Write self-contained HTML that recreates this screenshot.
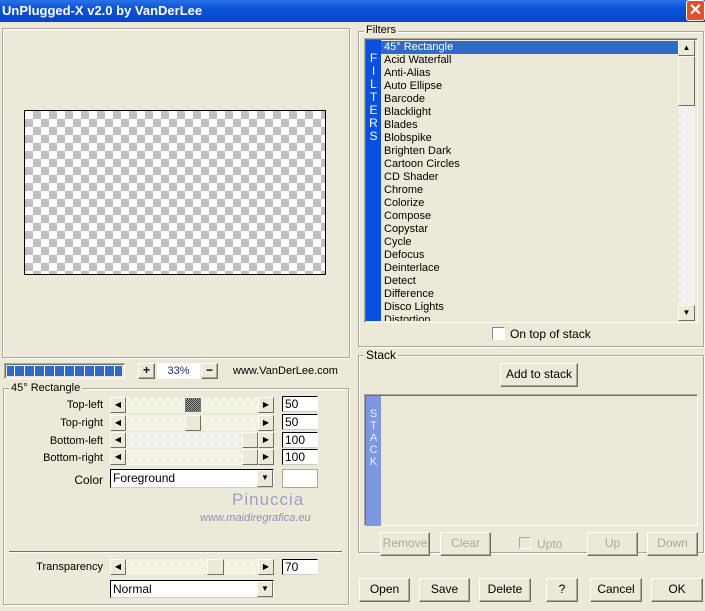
<!DOCTYPE html><html><head><style>
*{box-sizing:border-box;margin:0;padding:0}
body{width:705px;height:611px;background:#ECE9D8;font-family:"Liberation Sans",sans-serif;font-size:11px;position:relative;overflow:hidden;color:#000}
.a{position:absolute}
.title{left:0;top:0;width:705px;height:22px;background:linear-gradient(#2a70e8,#0a52d8 40%,#0846c8);color:#fff;font-weight:bold;font-size:13px;padding:3px 0 0 2px}
.close{left:686px;top:0;width:19px;height:21px;background:#e0502a;border:1px solid #fff;border-radius:3px;color:#fff;font-size:16px;font-weight:bold;text-align:center;line-height:19px}
.grp{border:1px solid #aca899;box-shadow:inset 1px 1px #fff,1px 1px #fff}
.lg{background:#ECE9D8;padding:0 2px}
.btn{background:#ECE9D8;border:1px solid;border-color:#fff #716f64 #716f64 #fff;box-shadow:inset -1px -1px #aca899;text-align:center;font-size:12px}
.dis{color:#aca899}
.sunk{border:1px solid;border-color:#aca899 #fff #fff #aca899;box-shadow:inset 1px 1px #716f64}
.edit{background:#fff;border:1px solid #000;border-right-color:#fff;border-bottom-color:#ccc;font-size:12px;padding-left:2px;line-height:14px}
.trk{background:repeating-conic-gradient(#ECE9D8 0 25%,#fff 0 50%) 0 0/2px 2px}
.arr{width:16px;height:16px;background:#ECE9D8;border:1px solid;border-color:#fff #716f64 #716f64 #fff;font-size:8px;text-align:center;line-height:14px}
.lbl{text-align:right;width:100px;left:3px;font-size:11px}
</style></head><body>
<div class="a title">UnPlugged-X v2.0 by VanDerLee</div>
<div class="a close">✕</div>

<div class="a grp" style="left:2px;top:28px;width:348px;height:330px"></div>
<div class="a" style="left:24px;top:110px;width:302px;height:165px;border:1px solid #000;background:repeating-conic-gradient(#c0c0c0 0 25%,#fff 0 50%) 0 0/16px 16px"></div>

<div class="a sunk" style="left:4px;top:363px;width:121px;height:16px;background:repeating-linear-gradient(90deg,#3169c6 0 9px,#fff 9px 10px);background-clip:content-box;padding:2px"></div>
<div class="a btn" style="left:138px;top:363px;width:17px;height:16px;line-height:13px;font-weight:bold">+</div>
<div class="a" style="left:157px;top:363px;width:43px;height:16px;background:#fff;color:#1a2a8a;text-align:center;line-height:16px;font-size:11px">33%</div>
<div class="a btn" style="left:201px;top:363px;width:17px;height:16px;line-height:13px;font-weight:bold">−</div>
<div class="a" style="left:233px;top:365px;font-size:11px">www.VanDerLee.com</div>

<div class="a grp" style="left:3px;top:388px;width:346px;height:217px"></div>
<div class="a lg" style="left:9px;top:382px">45° Rectangle</div>

<div class="a lbl" style="top:399px">Top-left</div>
<div class="a lbl" style="top:417px">Top-right</div>
<div class="a lbl" style="top:435px">Bottom-left</div>
<div class="a lbl" style="top:452px">Bottom-right</div>
<div class="a lbl" style="top:473px;font-size:12px">Color</div>
<div class="a lbl" style="top:561px">Transparency</div>

<div class="a trk" style="left:110px;top:397px;width:164px;height:16px"></div>
<div class="a arr" style="left:110px;top:397px">◀</div><div class="a arr" style="left:258px;top:397px">▶</div>
<div class="a" style="left:185px;top:398px;width:16px;height:14px;background:repeating-conic-gradient(#333 0 25%,#aaa 0 50%) 0 0/2px 2px;border:1px solid #777"></div>
<div class="a edit" style="left:282px;top:396px;width:36px;height:16px">50</div>

<div class="a trk" style="left:110px;top:415px;width:164px;height:16px"></div>
<div class="a arr" style="left:110px;top:415px">◀</div><div class="a arr" style="left:258px;top:415px">▶</div>
<div class="a arr" style="left:185px;top:415px"></div>
<div class="a edit" style="left:282px;top:414px;width:36px;height:16px">50</div>

<div class="a trk" style="left:110px;top:432px;width:164px;height:16px"></div>
<div class="a arr" style="left:110px;top:432px">◀</div><div class="a arr" style="left:258px;top:432px">▶</div>
<div class="a arr" style="left:242px;top:432px"></div>
<div class="a edit" style="left:282px;top:432px;width:36px;height:16px">100</div>

<div class="a trk" style="left:110px;top:449px;width:164px;height:16px"></div>
<div class="a arr" style="left:110px;top:449px">◀</div><div class="a arr" style="left:258px;top:449px">▶</div>
<div class="a arr" style="left:242px;top:449px"></div>
<div class="a edit" style="left:282px;top:449px;width:36px;height:16px">100</div>

<div class="a edit" style="left:110px;top:469px;width:164px;height:19px;font-size:12px;line-height:16px">Foreground</div>
<div class="a arr" style="left:257px;top:470px;height:17px">▼</div>
<div class="a" style="left:282px;top:469px;width:36px;height:19px;background:#fff;border:1px solid #aca899"></div>

<div class="a" style="left:232px;top:490px;color:#9aa0c8;font-size:17px;letter-spacing:1px">Pinuccia</div>
<div class="a" style="left:200px;top:512px;color:#8a90b8;font-size:11px;font-style:italic">www.maidiregrafica.eu</div>

<div class="a" style="left:9px;top:551px;width:333px;height:2px;background:#716f64;border-bottom:1px solid #fff"></div>

<div class="a trk" style="left:110px;top:559px;width:164px;height:16px"></div>
<div class="a arr" style="left:110px;top:559px">◀</div><div class="a arr" style="left:258px;top:559px">▶</div>
<div class="a arr" style="left:207px;top:559px;width:17px"></div>
<div class="a edit" style="left:282px;top:559px;width:36px;height:16px">70</div>
<div class="a edit" style="left:110px;top:580px;width:164px;height:18px;line-height:16px">Normal</div>
<div class="a arr" style="left:257px;top:581px">▼</div>

<!-- Filters -->
<div class="a grp" style="left:358px;top:31px;width:346px;height:316px"></div>
<div class="a lg" style="left:364px;top:24px">Filters</div>
<div class="a sunk" style="left:364px;top:38px;width:334px;height:285px"></div>
<div class="a" style="left:366px;top:40px;width:15px;height:281px;background:#0a50e0;color:#fff;font-size:12px;text-align:center;line-height:13px;padding-top:12px">F<br>I<br>L<br>T<br>E<br>R<br>S</div>
<div class="a" style="left:381px;top:40px;width:297px;height:281px;overflow:hidden">
<div style="background:#3169c6;color:#fff;height:13px;line-height:13px;padding-left:3px;margin-top:1px">45° Rectangle</div>
<div style="padding-left:3px;line-height:13px">Acid Waterfall<br>Anti-Alias<br>Auto Ellipse<br>Barcode<br>Blacklight<br>Blades<br>Blobspike<br>Brighten Dark<br>Cartoon Circles<br>CD Shader<br>Chrome<br>Colorize<br>Compose<br>Copystar<br>Cycle<br>Defocus<br>Deinterlace<br>Detect<br>Difference<br>Disco Lights<br>Distortion</div></div>
<div class="a trk" style="left:678px;top:40px;width:17px;height:281px"></div>
<div class="a arr" style="left:678px;top:40px;width:17px">▲</div>
<div class="a arr" style="left:678px;top:56px;width:17px;height:50px"></div>
<div class="a arr" style="left:678px;top:305px;width:17px">▼</div>
<div class="a" style="left:492px;top:327px;width:13px;height:13px;background:#fff;border:1px solid #aca899;border-color:#888 #fff #fff #888"></div>
<div class="a" style="left:510px;top:327px;font-size:12px">On top of stack</div>

<!-- Stack -->
<div class="a grp" style="left:358px;top:355px;width:346px;height:198px"></div>
<div class="a lg" style="left:364px;top:348px;font-size:12px">Stack</div>
<div class="a btn" style="left:500px;top:363px;width:78px;height:24px;line-height:21px">Add to stack</div>
<div class="a sunk" style="left:364px;top:394px;width:334px;height:132px"></div>
<div class="a" style="left:366px;top:396px;width:15px;height:130px;background:#7c98e0;color:#e8eeff;font-size:11px;text-align:center;line-height:12px;padding-top:12px">S<br>T<br>A<br>C<br>K</div>
<div class="a btn dis" style="left:380px;top:532px;width:50px;height:24px;line-height:21px">Remove</div>
<div class="a btn dis" style="left:440px;top:532px;width:51px;height:24px;line-height:21px">Clear</div>
<div class="a" style="left:519px;top:537px;width:12px;height:12px;border:1px solid;border-color:#aca899 #fff #fff #aca899"></div>
<div class="a dis" style="left:537px;top:537px;font-size:12px">Upto</div>
<div class="a btn dis" style="left:587px;top:532px;width:51px;height:24px;line-height:21px">Up</div>
<div class="a btn dis" style="left:647px;top:532px;width:51px;height:24px;line-height:21px">Down</div>

<div class="a btn" style="left:359px;top:578px;width:51px;height:24px;line-height:21px">Open</div>
<div class="a btn" style="left:419px;top:578px;width:51px;height:24px;line-height:21px">Save</div>
<div class="a btn" style="left:479px;top:578px;width:52px;height:24px;line-height:21px">Delete</div>
<div class="a btn" style="left:546px;top:578px;width:32px;height:24px;line-height:21px">?</div>
<div class="a btn" style="left:590px;top:578px;width:52px;height:24px;line-height:21px">Cancel</div>
<div class="a btn" style="left:651px;top:578px;width:52px;height:24px;line-height:21px">OK</div>
</body></html>
